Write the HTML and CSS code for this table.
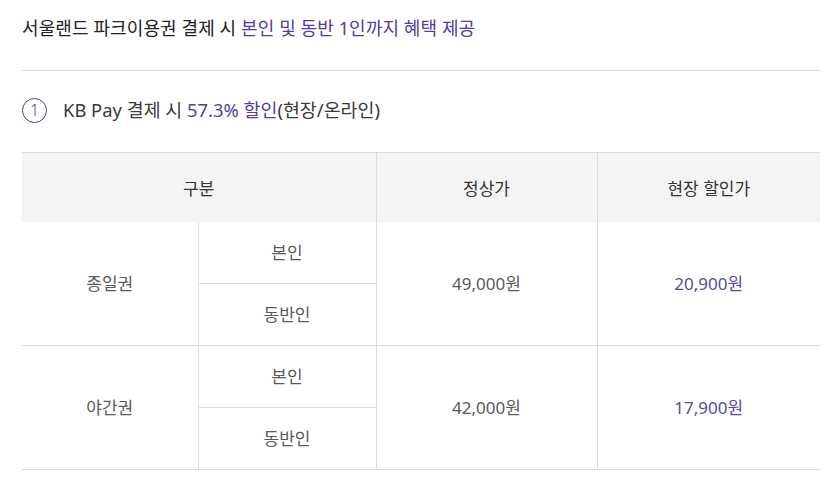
FILE: index.html
```html
<!DOCTYPE html>
<html lang="ko">
<head>
<meta charset="utf-8">
<link rel="stylesheet" href="styles.css">
</head>
<body>
<div class="page">
  <h2 class="title">서울랜드 파크이용권 결제 시 <span class="accent">본인 및 동반 1인까지 혜택 제공</span></h2>
  <div class="point">
    <span class="num">1</span>
    <p class="point-text">KB Pay 결제 시 <span class="accent">57.3% 할인</span>(현장/온라인)</p>
  </div>
  <table class="price">
    <colgroup>
      <col class="c1"><col class="c2"><col class="c3"><col class="c4">
    </colgroup>
    <thead>
      <tr><th colspan="2">구분</th><th>정상가</th><th>현장 할인가</th></tr>
    </thead>
    <tbody>
      <tr class="sub"><td rowspan="2">종일권</td><td>본인</td><td rowspan="2">49,000원</td><td rowspan="2" class="sale">20,900원</td></tr>
      <tr class="end"><td>동반인</td></tr>
      <tr class="sub"><td rowspan="2">야간권</td><td>본인</td><td rowspan="2">42,000원</td><td rowspan="2" class="sale">17,900원</td></tr>
      <tr class="end"><td>동반인</td></tr>
    </tbody>
  </table>
</div>
</body>
</html>
```

FILE: styles.css
```css
html, body {
  margin: 0;
  padding: 0;
  background: #fff;
}
body {
  font-family: "Noto Sans", "Noto Sans CJK KR", sans-serif;
  color: #222;
}
.page {
  width: 798px;
  margin-left: 22px;
  padding-top: 15px;
}
.title {
  margin: 0;
  font-size: 18px;
  font-weight: 400;
  line-height: 26px;
  color: #222;
  letter-spacing: 0.1px;
  padding-bottom: 29px;
  border-bottom: 1px solid #dcdcdc;
}
.accent {
  color: #553c9a;
}
.point {
  display: flex;
  align-items: center;
  gap: 16px;
  margin-top: 26px;
  height: 26px;
}
.num {
  box-sizing: border-box;
  width: 25px;
  height: 25px;
  border: 1px solid #553c9a;
  border-radius: 50%;
  color: #553c9a;
  font-size: 16px;
  font-weight: 300;
  line-height: 23px;
  text-align: center;
}
.point-text {
  margin: 0;
  font-size: 18.4px;
  line-height: 26px;
  color: #3a3a3a;
}
.price {
  width: 798px;
  margin-top: 29px;
  border-collapse: collapse;
  table-layout: fixed;
  border-top: 1px solid #dcdcdc;
  border-bottom: 1px solid #dcdcdc;
}
.c1 { width: 176px; }
.c2 { width: 178px; }
.c3 { width: 221px; }
.c4 { width: 223px; }
.price th {
  background: #f4f4f4;
  height: 69px;
  font-size: 17px;
  font-weight: 400;
  color: #333;
  padding: 0;
  border-left: 1px solid #dcdcdc;
}
.price th:first-child {
  border-left: none;
}
.price td {
  height: 59px;
  padding: 0 0 2px;
  text-align: center;
  font-size: 17px;
  color: #5a5a5a;
  border-left: 1px solid #dcdcdc;
  border-bottom: 1px solid #dcdcdc;
}
.price tr.sub td:first-child {
  border-left: none;
}
.price td.sale {
  color: #5a4a9c;
}
```
